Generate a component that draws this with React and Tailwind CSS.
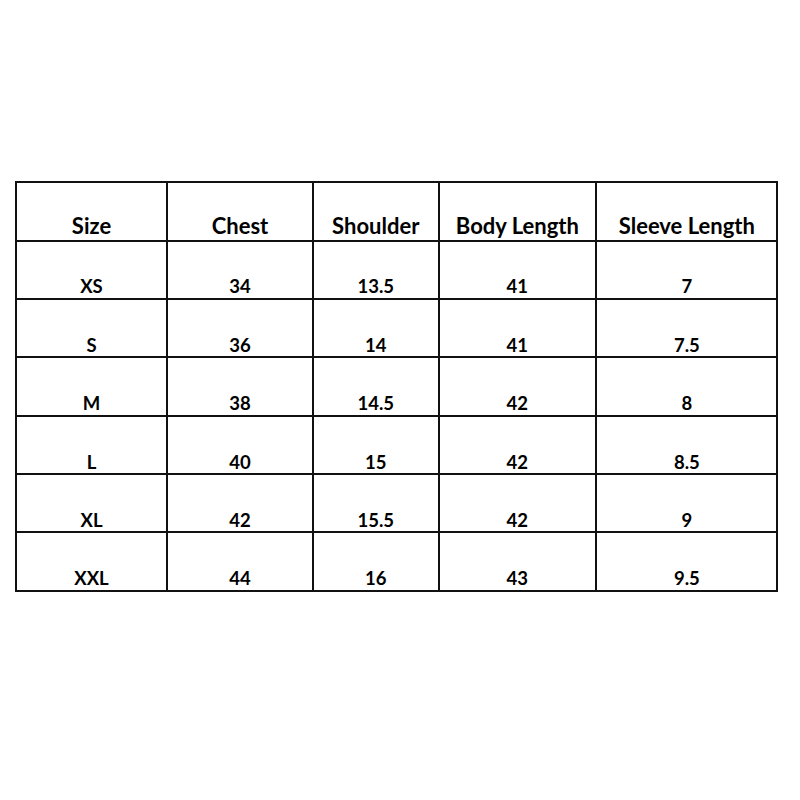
import React from "react";

const header = ["Size", "Chest", "Shoulder", "Body Length", "Sleeve Length"];
const rows = [
  ["XS", "34", "13.5", "41", "7"],
  ["S", "36", "14", "41", "7.5"],
  ["M", "38", "14.5", "42", "8"],
  ["L", "40", "15", "42", "8.5"],
  ["XL", "42", "15.5", "42", "9"],
  ["XXL", "44", "16", "43", "9.5"],
];

export default function App() {
  return (
    <div
      className="w-[800px] h-[800px] bg-white pt-[181px] pl-[15px]"
      style={{ fontFamily: "Lato, 'Open Sans', sans-serif" }}
    >
      <div className="grid grid-cols-[151px_146px_125.5px_157.7px_181.3px] w-fit border-l-2 border-t-2 border-[#111] text-black font-bold">
        {header.map((h) => (
          <div
            key={h}
            className="h-[58.5px] flex items-end justify-center border-r-2 border-b-2 border-[#111] text-[22px] leading-none pb-[3px]"
          >
            {h}
          </div>
        ))}
        {rows.map((r) =>
          r.map((c, i) => (
            <div
              key={r[0] + i}
              className="h-[58.4px] flex items-end justify-center border-r-2 border-b-2 border-[#111] text-[18.5px] leading-none pb-[2px]"
            >
              {c}
            </div>
          ))
        )}
      </div>
    </div>
  );
}
